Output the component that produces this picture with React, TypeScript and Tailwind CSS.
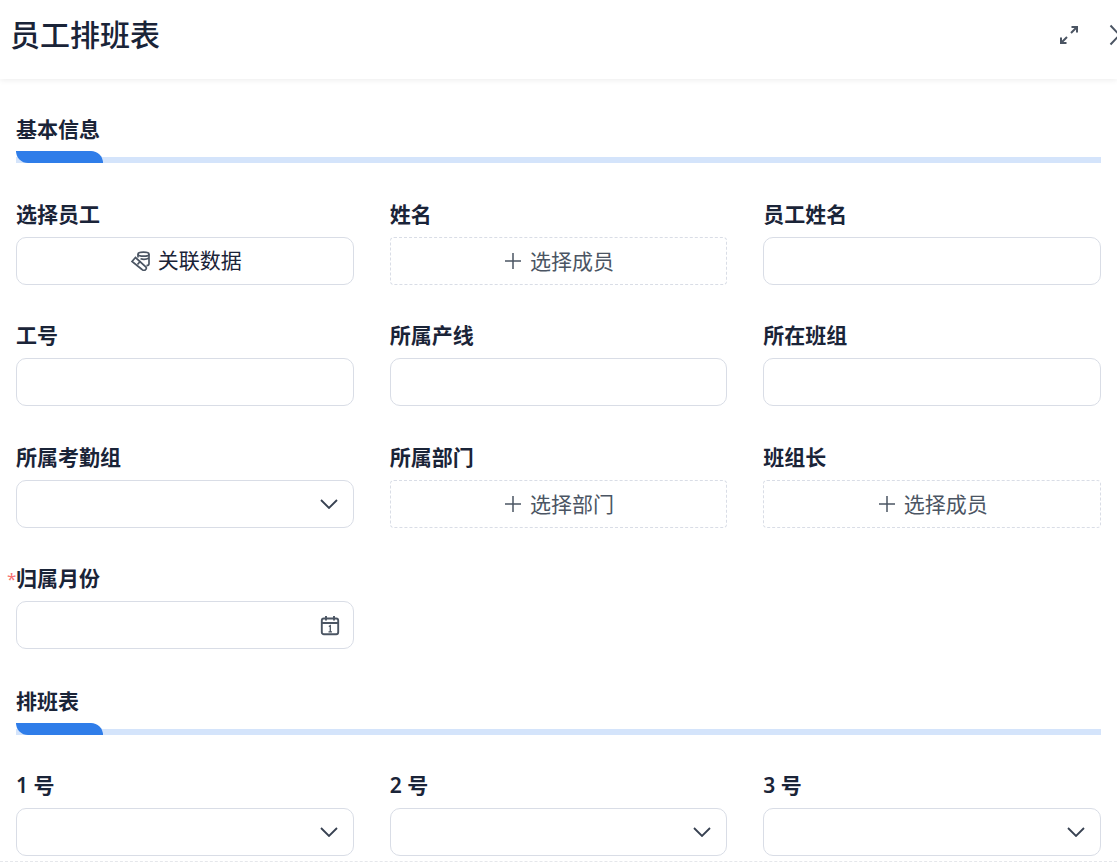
import * as React from "react";

function ExpandIcon() {
  return (
    <svg width="20" height="20" viewBox="0 0 20 20" fill="none" stroke="#4b5563" strokeWidth="2">
      <path d="M12 8l6-6M12.500 2H18v5.500" />
      <path d="M2 18l6-6M2 12.500V18h5.500" />
    </svg>
  );
}

function CloseChevron() {
  return (
    <svg width="18" height="22" viewBox="0 0 18 22" fill="none" stroke="#4b5563" strokeWidth="2">
      <path d="M1.500 1.500L10.500 11L1.500 20.500" />
    </svg>
  );
}

function Chevron() {
  return (
    <svg width="18" height="10" viewBox="0 0 18 10" fill="none" stroke="#374151" strokeWidth="1.800">
      <path d="M1 1l8 8 8-8" />
    </svg>
  );
}

function LinkDataIcon() {
  return (
    <svg width="20" height="20" viewBox="0 0 20 20" fill="none" stroke="#4b5563" strokeWidth="1.700">
      <ellipse cx="12.500" cy="3.200" rx="5.500" ry="2" />
      <path d="M7 3.200v3.300M18 3.200v9.500c0 1-1.200 1.800-2.500 2M9.500 7.800c3 .8 6 .6 8.500-.8" />
      <path d="M1 10.500L4.500 6.500L15 16Q16 18 14.200 19Q12.500 20 11 18.500Z" />
      <path d="M6.500 13.500L9.500 10" />
    </svg>
  );
}

function CalendarIcon() {
  return (
    <svg width="20" height="21" viewBox="0 0 20 21" fill="none" stroke="#4b5563" strokeWidth="1.900">
      <rect x="1.800" y="3.500" width="16.400" height="15.700" rx="2" />
      <path d="M1.800 8h16.400M6 1v4.500M14 1v4.500" />
      <path d="M8.800 11.500l1.500-.8v6M8.500 16.800h3.500" strokeWidth="1.300" />
    </svg>
  );
}

function PlusIcon() {
  return (
    <svg width="16" height="16" viewBox="0 0 16 16" fill="none" stroke="#4b5563" strokeWidth="1.500">
      <path d="M8 0v16M0 8h16" />
    </svg>
  );
}

function SectionTitle({ title }: { title: string }) {
  return (
    <div>
      <h2 className="h-[28px] text-[21px] leading-[26px] font-semibold text-[#1a2438]">{title}</h2>
      <div className="relative mt-[7px] h-[12px]">
        <div className="absolute bottom-0 left-0 right-0 h-[6px] bg-[#d4e4fb]" />
        <div className="absolute left-0 top-0 h-[12px] w-[87px] rounded-tr-[12px] rounded-bl-[12px] bg-[#2f7de9]" />
      </div>
    </div>
  );
}

function Field({ label, required, children }: { label: string; required?: boolean; children?: React.ReactNode }) {
  return (
    <div>
      <label className="relative mb-[8px] block h-[28px] text-[21px] leading-[27px] font-semibold text-[#1a2438]">
        {required && <span className="absolute left-[-9px] top-0 text-[17px] font-normal text-[#f87171]">*</span>}
        {label}
      </label>
      {children}
    </div>
  );
}

const boxClass = "flex h-[48px] items-center rounded-[10px] border border-[#d9dde6] bg-white";

function TextBox() {
  return <div className={boxClass} />;
}

function SelectBox() {
  return (
    <div className={boxClass + " justify-end pr-[15px]"}>
      <Chevron />
    </div>
  );
}

function PickerBox({ text }: { text: string }) {
  return (
    <div className="flex h-[48px] items-center justify-center gap-[9px] rounded-[4px] border border-dashed border-[#d9dde6] bg-white pl-[2px] text-[21px] text-[#4b5563]">
      <PlusIcon />
      <span className="pt-[2px]">{text}</span>
    </div>
  );
}

export default function App() {
  return (
    <div className="h-[863px] w-[1117px] overflow-hidden bg-white" style={{ fontFamily: '"Noto Sans", "Noto Sans CJK SC", sans-serif' }}>
      <header className="flex h-[79px] items-center justify-between pb-[9px] shadow-[0_1px_6px_rgba(0,0,0,0.08)]">
        <h1 className="ml-[10px] text-[30px] leading-[40px] font-medium text-[#1a2438]">员工排班表</h1>
        <div className="mr-[-10px] flex items-center gap-[30px]">
          <ExpandIcon />
          <CloseChevron />
        </div>
      </header>

      <main className="px-[16px] pt-[37px]">
        <SectionTitle title="基本信息" />
        <div className="mt-[38px] grid grid-cols-3 gap-x-[36px] gap-y-[37.4px]">
          <Field label="选择员工">
            <div className={boxClass + " justify-center gap-[7px] pl-[3px] text-[21px] text-[#1a2438]"}>
              <LinkDataIcon />
              <span>关联数据</span>
            </div>
          </Field>
          <Field label="姓名">
            <PickerBox text="选择成员" />
          </Field>
          <Field label="员工姓名">
            <TextBox />
          </Field>
          <Field label="工号">
            <TextBox />
          </Field>
          <Field label="所属产线">
            <TextBox />
          </Field>
          <Field label="所在班组">
            <TextBox />
          </Field>
          <Field label="所属考勤组">
            <SelectBox />
          </Field>
          <Field label="所属部门">
            <PickerBox text="选择部门" />
          </Field>
          <Field label="班组长">
            <PickerBox text="选择成员" />
          </Field>
          <Field label="归属月份" required>
            <div className={boxClass + " justify-end pr-[13px]"}>
              <CalendarIcon />
            </div>
          </Field>
        </div>

        <div className="mt-[38.4px]">
          <SectionTitle title="排班表" />
        </div>
        <div className="mt-[37.6px] grid grid-cols-3 gap-x-[36px]">
          <Field label="1 号">
            <SelectBox />
          </Field>
          <Field label="2 号">
            <SelectBox />
          </Field>
          <Field label="3 号">
            <SelectBox />
          </Field>
        </div>
      </main>
      <div className="mt-[5px] border-t border-dashed border-[#e5e7eb]" />
    </div>
  );
}
